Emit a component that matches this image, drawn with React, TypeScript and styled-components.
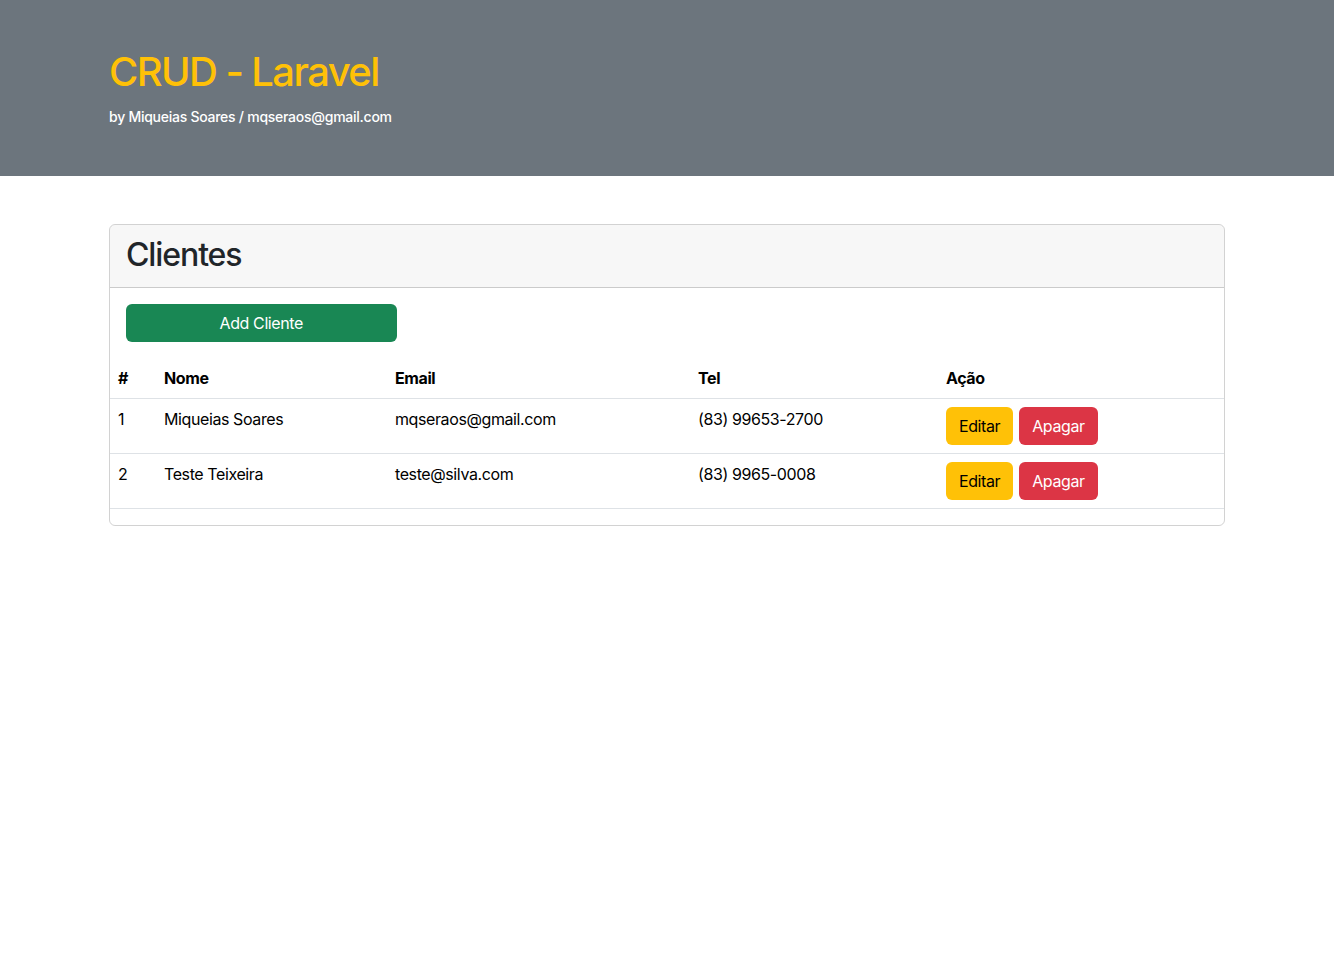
import React from "react";
import styled, { createGlobalStyle } from "styled-components";

const Global = createGlobalStyle`
  * { box-sizing: border-box; }
  body {
    margin: 0;
    font-family: Inter, "Noto Sans", "Liberation Sans", sans-serif;
    font-size: 16px;
    line-height: 1.5;
    letter-spacing: -0.4px;
    color: #212529;
    background: #fff;
  }
`;

const Hero = styled.header`
  background: #6c757d;
  padding: 48px 0;
`;

const Container = styled.div`
  max-width: 1140px;
  margin: 0 auto;
  padding: 0 12px;
`;

const Title = styled.h1`
  margin: 0 0 8px;
  font-size: 40px;
  font-weight: 500;
  line-height: 48px;
  letter-spacing: -1.6px;
  color: #ffc107;
`;

const Subtitle = styled.p`
  margin: 0;
  font-size: 14px;
  line-height: 25px;
  height: 24px;
  letter-spacing: -0.26px;
  font-weight: 500;
  color: #fff;
`;

const Main = styled(Container)`
  padding-top: 48px;
`;

const Card = styled.section`
  border: 1px solid rgba(0, 0, 0, 0.175);
  border-radius: 6px;
  overflow: hidden;
`;

const CardHeader = styled.div`
  background: rgba(0, 0, 0, 0.03);
  border-bottom: 1px solid rgba(0, 0, 0, 0.175);
  padding: 11px 16px 5px;
`;

const CardTitle = styled.h2`
  margin: 0 0 8px;
  font-size: 32px;
  font-weight: 500;
  line-height: 1.2;
  letter-spacing: -1.1px;
  color: #212529;
`;

const CardBody = styled.div`
  padding: 16px;
  display: grid;
  grid-template-columns: repeat(4, 1fr);
`;

const Button = styled.button<{ $variant: "success" | "warning" | "danger"; $block?: boolean }>`
  font-family: inherit;
  font-size: 16px;
  line-height: 24px;
  letter-spacing: -0.4px;
  padding: 6px 12px;
  border-radius: 6px;
  border: 1px solid transparent;
  cursor: pointer;
  width: ${(p) => (p.$block ? "100%" : "auto")};
  background: ${(p) =>
    p.$variant === "success" ? "#198754" : p.$variant === "warning" ? "#ffc107" : "#dc3545"};
  color: ${(p) => (p.$variant === "warning" ? "#000" : "#fff")};
`;

const Table = styled.table`
  width: 100%;
  border-collapse: collapse;
  margin-bottom: 16px;
  color: #000;
  text-align: left;
`;

const Th = styled.th`
  padding: 8px;
  font-weight: 700;
  vertical-align: top;
  border-bottom: 1px solid #dee2e6;
`;

const Td = styled.td`
  padding: 8px;
  vertical-align: top;
  border-bottom: 1px solid #dee2e6;
`;

const Actions = styled.div`
  display: flex;
  gap: 6px;
`;

const clientes = [
  { id: 1, nome: "Miqueias Soares", email: "mqseraos@gmail.com", tel: "(83) 99653-2700" },
  { id: 2, nome: "Teste Teixeira", email: "teste@silva.com", tel: "(83) 9965-0008" },
];

export default function App() {
  return (
    <>
      <Global />
      <Hero>
        <Container>
          <Title>CRUD - Laravel</Title>
          <Subtitle>by Miqueias Soares / mqseraos@gmail.com</Subtitle>
        </Container>
      </Hero>
      <Main>
        <Card>
          <CardHeader>
            <CardTitle>Clientes</CardTitle>
          </CardHeader>
          <CardBody>
            <Button $variant="success" $block>
              Add Cliente
            </Button>
          </CardBody>
          <Table>
            <colgroup>
              <col style={{ width: 46 }} />
              <col style={{ width: 231 }} />
              <col style={{ width: 303 }} />
              <col style={{ width: 248 }} />
              <col />
            </colgroup>
            <thead>
              <tr>
                <Th>#</Th>
                <Th>Nome</Th>
                <Th>Email</Th>
                <Th>Tel</Th>
                <Th>Ação</Th>
              </tr>
            </thead>
            <tbody>
              {clientes.map((c) => (
                <tr key={c.id}>
                  <Td>{c.id}</Td>
                  <Td>{c.nome}</Td>
                  <Td>{c.email}</Td>
                  <Td>{c.tel}</Td>
                  <Td>
                    <Actions>
                      <Button $variant="warning">Editar</Button>
                      <Button $variant="danger">Apagar</Button>
                    </Actions>
                  </Td>
                </tr>
              ))}
            </tbody>
          </Table>
        </Card>
      </Main>
    </>
  );
}
